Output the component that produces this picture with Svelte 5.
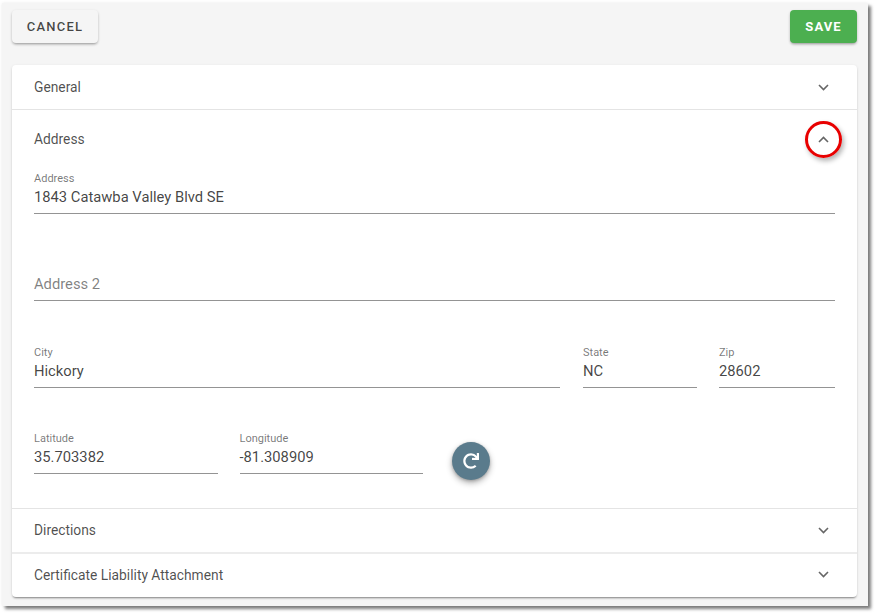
<script>
  const chevron = "M1 1 L5.5 5.5 L10 1";
</script>

<div class="page">
  <div class="frame">
    <div class="toolbar">
      <button class="btn cancel">CANCEL</button>
      <button class="btn save">SAVE</button>
    </div>
    <div class="card">
      <div class="row general">
        <span>General</span>
        <svg class="chev" width="11" height="7" viewBox="0 0 11 7"><path d={chevron} /></svg>
      </div>
      <div class="section">
        <div class="row address-head">
          <span>Address</span>
          <span class="ring">
            <svg class="chev" width="11" height="7" viewBox="0 0 11 7"><path d="M1 6 L5.5 1.5 L10 6" /></svg>
          </span>
        </div>
        <div class="fields">
          <div class="line">
            <div class="field grow"><label>Address</label><div class="value">1843 Catawba Valley Blvd SE</div></div>
          </div>
          <div class="line">
            <div class="field grow"><div class="placeholder">Address 2</div></div>
          </div>
          <div class="line short">
            <div class="field grow"><label>City</label><div class="value">Hickory</div></div>
            <div class="field state"><label>State</label><div class="value">NC</div></div>
            <div class="field zip"><label>Zip</label><div class="value">28602</div></div>
          </div>
          <div class="line">
            <div class="field geo"><label>Latitude</label><div class="value">35.703382</div></div>
            <div class="field geo"><label>Longitude</label><div class="value">-81.308909</div></div>
            <button class="fab" aria-label="Refresh">
              <svg width="16" height="16" viewBox="0 0 512 512"><path fill="#fff" d="M500.33 0h-47.41a12 12 0 0 0-12 12.57l4 82.76A247.42 247.42 0 0 0 256 8C119.34 8 7.9 119.53 8 256.19 8.1 393.07 119.1 504 256 504a247.1 247.1 0 0 0 166.18-63.91 12 12 0 0 0 .48-17.43l-34-34a12 12 0 0 0-16.38-.55A176 176 0 1 1 402.1 157.8l-101.53-4.87a12 12 0 0 0-12.57 12v47.41a12 12 0 0 0 12 12h200.33a12 12 0 0 0 12-12V12a12 12 0 0 0-12-12z"/></svg>
            </button>
          </div>
        </div>
      </div>
      <div class="row directions">
        <span>Directions</span>
        <svg class="chev" width="11" height="7" viewBox="0 0 11 7"><path d={chevron} /></svg>
      </div>
      <div class="row cert">
        <span>Certificate Liability Attachment</span>
        <svg class="chev" width="11" height="7" viewBox="0 0 11 7"><path d={chevron} /></svg>
      </div>
    </div>
  </div>
</div>

<style>
  :global(body) {
    margin: 0;
    background: #fff;
    font-family: Roboto, "Liberation Sans", sans-serif;
  }
  .page {
    width: 876px;
    height: 616px;
    padding: 3px 0 0 2px;
    box-sizing: border-box;
    overflow: hidden;
  }
  .frame {
    box-sizing: border-box;
    width: 866px;
    height: 603px;
    padding: 7px 11px 0 10px;
    background: #f5f5f5;
    box-shadow: 3px 3px 3px rgba(0, 0, 0, 0.5), 0 0 3px rgba(0, 0, 0, 0.08);
  }
  .toolbar {
    display: flex;
    justify-content: space-between;
    margin-bottom: 22px;
  }
  .btn {
    height: 33px;
    border: 0;
    border-radius: 4px;
    font-family: inherit;
    font-size: 13px;
    font-weight: 500;
    box-shadow: 0 2px 3px -1px rgba(0, 0, 0, 0.3), 0 1px 3px rgba(0, 0, 0, 0.14);
  }
  .cancel {
    width: 86px;
    background: #f5f5f5;
    color: rgba(0, 0, 0, 0.72);
    letter-spacing: 1.2px;
  }
  .save {
    width: 67px;
    background: #4caf50;
    color: #fff;
    font-weight: 700;
    letter-spacing: 1.1px;
  }
  .card {
    background: #fff;
    border-radius: 4px;
    box-shadow: 0 2px 2px -1px rgba(0, 0, 0, 0.4), 0 1px 3px rgba(0, 0, 0, 0.12);
    height: 532px;
    display: flex;
    flex-direction: column;
  }
  .row {
    display: flex;
    align-items: center;
    justify-content: space-between;
    padding: 0 28px 0 22px;
    font-size: 13.8px;
    color: rgba(0, 0, 0, 0.7);
    box-sizing: border-box;
  }
  .general { height: 45px; border-bottom: 1px solid #e4e4e4; }
  .section { height: 399px; border-bottom: 1px solid #e4e4e4; box-sizing: border-box; }
  .address-head { height: 57px; position: relative; }
  .directions { height: 45px; border-bottom: 2px solid #ececec; padding-bottom: 1px; }
  .cert { height: 43px; padding-bottom: 2px; }
  .chev { fill: none; stroke: #666; stroke-width: 1.6; display: block; }
  .ring {
    position: absolute;
    right: 15px;
    top: 11px;
    box-sizing: border-box;
    width: 37px;
    height: 37px;
    border: 3px solid #e80000;
    border-radius: 50%;
    display: flex;
    align-items: center;
    justify-content: center;
    box-shadow: 2px 3px 5px rgba(0, 0, 0, 0.3);
  }
  .fields {
    padding: 0 22px;
    display: flex;
    flex-direction: column;
  }
  .line {
    display: flex;
    gap: 22px;
    height: 87px;
    align-items: flex-start;
  }
  .line.short { height: 86px; }
  .field {
    box-sizing: border-box;
    height: 47px;
    border-bottom: 1px solid #949494;
    display: flex;
    flex-direction: column;
    justify-content: flex-end;
  }
  .grow { flex: 1; }
  .state { width: 114px; margin-left: 1px; }
  .zip { width: 116px; }
  .geo { width: 183.5px; }
  label {
    font-size: 11px;
    line-height: 12px;
    margin-bottom: 1px;
    color: rgba(0, 0, 0, 0.54);
  }
  .value {
    font-size: 14.75px;
    line-height: 22px;
    padding-bottom: 5px;
    color: rgba(0, 0, 0, 0.74);
  }
  .placeholder {
    font-size: 14.75px;
    line-height: 22px;
    padding-bottom: 5px;
    color: rgba(0, 0, 0, 0.5);
  }
  .fab {
    width: 38px;
    height: 38px;
    margin: 15px 0 0 7px;
    padding: 0;
    border: 0;
    border-radius: 50%;
    background: #5a7b8c;
    display: flex;
    align-items: center;
    justify-content: center;
    box-shadow: 0 3px 6px rgba(0, 0, 0, 0.3), 0 1px 3px rgba(0, 0, 0, 0.2);
  }
</style>
